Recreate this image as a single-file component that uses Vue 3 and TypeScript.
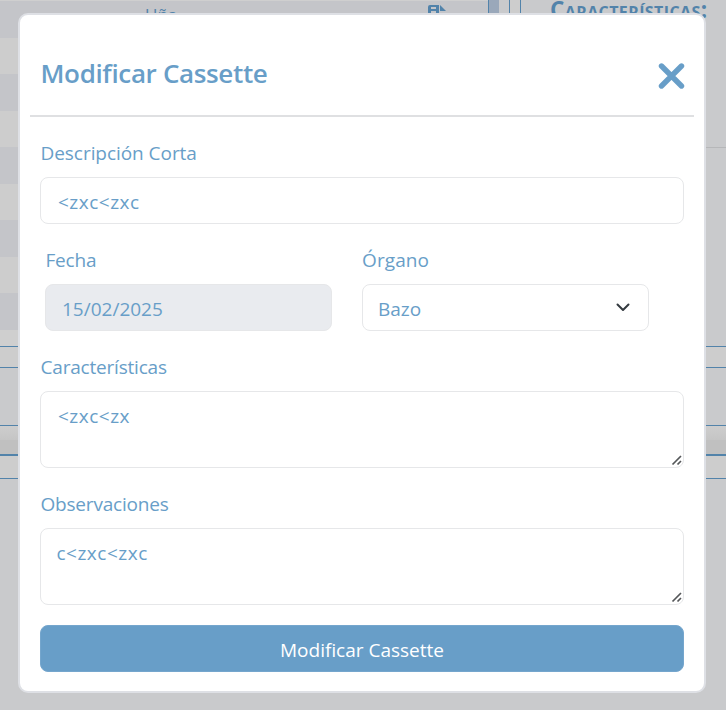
<script setup lang="ts">
import { ref } from 'vue'

const descripcion = ref('<zxc<zxc')
const fecha = ref('15/02/2025')
const organo = ref('Bazo')
const caracteristicas = ref('<zxc<zx')
const observaciones = ref('c<zxc<zxc')
const rows = 8
</script>

<template>
  <div class="page">
    <div class="columns">
      <div class="table">
        <div class="row head">
          <span class="organ">Uña</span>
          <svg class="file" viewBox="0 0 20 20" width="20" height="20">
            <path fill="#5283aa" fill-rule="evenodd" d="M2 0H11V8H19V15H0V2Q0 0 2 0ZM3 2V4H8V2ZM3 6V8H8V6Z" />
            <path fill="#5283aa" d="M12 0L18 6H12Z" />
          </svg>
        </div>
        <div v-for="n in rows" :key="n" class="row"></div>
      </div>
      <div class="scroll"></div>
      <div class="gutter"></div>
      <div class="detail"><div class="detail-title">Características:</div></div>
    </div>
    <div class="band light"></div>
    <div class="band body"></div>
    <div class="band fade"></div>
    <div class="band dark"></div>
    <div class="band foot"></div>
  </div>

  <div class="overlay">
    <form class="modal" @submit.prevent>
      <header class="header">
        <h2>Modificar Cassette</h2>
        <button class="close" type="button" aria-label="Cerrar">
          <svg viewBox="0 0 28 28" width="28" height="28">
            <path d="M4.5 4L24.5 24M24.5 4L4.5 24" fill="none" stroke="#689ec8" stroke-width="5.4" stroke-linecap="round" />
          </svg>
        </button>
      </header>
      <div class="fields">
        <div class="field">
          <label>Descripción Corta</label>
          <input v-model="descripcion" class="control code" spellcheck="false" />
        </div>
        <div class="pair">
          <div class="field">
            <label class="tight">Fecha</label>
            <input v-model="fecha" class="control date" disabled />
          </div>
          <div class="field">
            <label class="organ-label">Órgano</label>
            <div class="control select">
              <span>{{ organo }}</span>
              <svg viewBox="0 0 16 16" width="16" height="16">
                <path d="M2.5 5.5L8 11L13.5 5.5" fill="none" stroke="#343a40" stroke-width="2" stroke-linecap="round" stroke-linejoin="round" />
              </svg>
            </div>
          </div>
        </div>
        <div class="field">
          <label class="tight">Características</label>
          <textarea v-model="caracteristicas" class="control area code" spellcheck="false"></textarea>
          <svg class="grip" viewBox="0 0 12 12" width="12" height="12">
            <path d="M1.5 10.5L10 2M6.5 10.5L10 7" fill="none" stroke="#55575a" stroke-width="1.7" />
          </svg>
        </div>
        <div class="field">
          <label class="tight">Observaciones</label>
          <textarea v-model="observaciones" class="control area code obs" spellcheck="false"></textarea>
          <svg class="grip" viewBox="0 0 12 12" width="12" height="12">
            <path d="M1.5 10.5L10 2M6.5 10.5L10 7" fill="none" stroke="#55575a" stroke-width="1.7" />
          </svg>
        </div>
        <button class="submit" type="submit">Modificar Cassette</button>
      </div>
    </form>
  </div>
</template>

<style>
body {
  overflow: hidden;
  background: #c9cacc;
}
</style>

<style scoped>
* {
  box-sizing: border-box;
}
.page,
.overlay {
  font-family: 'Open Sans', 'Noto Sans', sans-serif;
}
.page {
  height: 710px;
  overflow: hidden;
  color: #5283aa;
}
.columns {
  display: flex;
  height: 346px;
}
.table {
  width: 488px;
  padding-top: 1px;
  background: #cfcfcf;
}
.row {
  height: 36.5px;
  background: #c4c5c9;
}
.row:nth-child(even) {
  background: #cdcdcd;
}
.head {
  display: flex;
  justify-content: space-between;
  padding: 4px 40px 0 145px;
}
.organ {
  font-size: 17px;
  line-height: 20px;
}
.scroll {
  width: 11px;
  background: #9aa8ba;
  border-left: 1px solid #5283aa;
}
.gutter {
  width: 22px;
  margin-left: 10px;
  border-left: 1px solid #5283aa;
  background: linear-gradient(90deg, #cdcdcd 10px, #5283aa 10px, #5283aa 11px, #c9cacc 11px);
}
.detail {
  flex: 1;
  min-width: 0;
  background: #c9cacc;
}
.detail-title {
  height: 148px;
  padding-left: 19px;
  border-bottom: 1px solid #b6b7b9;
  font-size: 22.5px;
  font-weight: 700;
  font-variant: small-caps;
  letter-spacing: 0.4px;
  line-height: 19px;
  white-space: nowrap;
}
.band {
  border-top: 1px solid #5283aa;
}
.light {
  height: 21px;
  background: #cdcdcd;
}
.body {
  height: 58px;
  background: #c9cacc;
}
.fade {
  height: 15px;
  background: linear-gradient(#cdcdcd, #c5c5c5);
}
.dark {
  height: 38px;
  border-top: 0;
  background: linear-gradient(#c0c0c0 14px, #5283aa 14px, #5283aa 16px, #cdcdcd 16px);
}
.foot {
  height: 232px;
  background: #c9cacc;
}
.overlay {
  position: fixed;
  inset: 0;
  display: flex;
  padding: 13px 20px 17px 18px;
}
.modal {
  flex: 1;
  padding: 0 10px;
  border: 2px solid #dee0e5;
  border-radius: 10px;
  background: #fff;
  color: #689ec8;
}
.header {
  display: flex;
  align-items: center;
  justify-content: space-between;
  height: 102px;
  padding: 16px 9px 0 10.5px;
  border-bottom: 2px solid #dfe0e2;
}
h2 {
  margin: 0;
  font-size: 26px;
  font-weight: 600;
  letter-spacing: -0.35px;
  line-height: 36px;
  white-space: nowrap;
}
.close {
  display: flex;
  margin-top: 5px;
  padding: 0;
  border: 0;
  background: none;
}
.fields {
  display: flex;
  flex-direction: column;
  gap: 23px;
  padding: 23px 10px 0;
}
.field {
  position: relative;
  display: flex;
  flex-direction: column;
  gap: 10px;
}
label {
  height: 27px;
  padding-left: 0.5px;
  font-size: 19px;
  letter-spacing: -0.05px;
  line-height: 27px;
  white-space: nowrap;
}
.organ-label {
  padding-left: 0;
  letter-spacing: 0.1px;
}
.tight {
  letter-spacing: -0.2px;
}
.pair {
  display: grid;
  grid-template-columns: 287px 287px;
  column-gap: 30px;
  padding-left: 5px;
}
.control {
  display: block;
  width: 100%;
  height: 47px;
  margin: 0;
  padding: 2px 16px 0;
  border: 1px solid #e6e7e9;
  border-radius: 8px;
  outline: 0;
  background: #fff;
  color: #689ec8;
  font: 19px 'Open Sans', 'Noto Sans', sans-serif;
}
.code {
  padding-left: 17px;
  letter-spacing: 0.5px;
}
.date {
  background: #e9ebef;
}
.select {
  display: flex;
  align-items: center;
  justify-content: space-between;
  padding: 3px 17px 0 15px;
}
.select svg {
  margin-top: -5px;
}
.area {
  height: 77px;
  padding-top: 11px;
  line-height: 26px;
  resize: none;
}
.obs {
  padding-left: 15.5px;
}
.grip {
  position: absolute;
  right: 1px;
  bottom: 2px;
}
.submit {
  height: 47px;
  margin-top: -3px;
  padding: 3px 0 0;
  border: 1px solid #75a6cd;
  border-radius: 8px;
  background: #689ec8;
  color: #fff;
  font: 19px 'Open Sans', 'Noto Sans', sans-serif;
}
</style>
